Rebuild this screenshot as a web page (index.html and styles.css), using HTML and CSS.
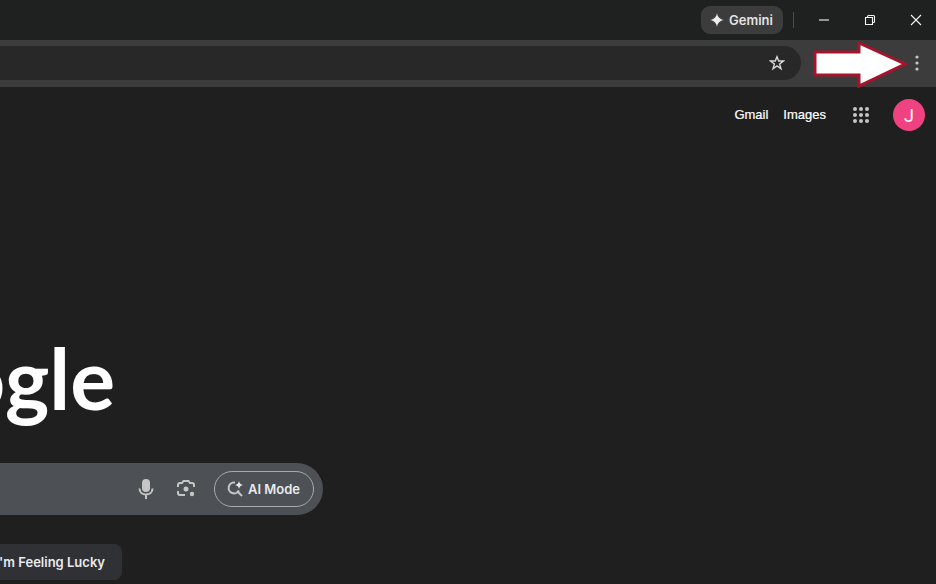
FILE: index.html
```html
<!DOCTYPE html>
<html lang="en">
<head>
<meta charset="utf-8">
<title>Google</title>
<link rel="stylesheet" href="styles.css">
</head>
<body>
<div class="titlebar">
  <div class="gemini">
    <svg class="gemini-icon" viewBox="0 0 14 14"><path d="M7 0C7.500 4 10 6.500 14 7C10 7.500 7.500 10 7 14C6.500 10 4 7.500 0 7C4 6.500 6.500 4 7 0Z"/></svg>
    <span>Gemini</span>
  </div>
  <div class="divider"></div>
  <div class="winbtn">
    <svg viewBox="0 0 12 12"><path d="M1 6H11" /></svg>
  </div>
  <div class="winbtn">
    <svg viewBox="0 0 12 12"><path d="M1.500 3.500H8.500V10.500H1.500Z M3.500 3.500V2.500Q3.500 1.500 4.500 1.500H9.500Q10.500 1.500 10.500 2.500V7.500Q10.500 8.500 9.500 8.500H8.500"/></svg>
  </div>
  <div class="winbtn">
    <svg viewBox="0 0 12 12"><path d="M1 1L11 11M11 1L1 11"/></svg>
  </div>
</div>
<div class="toolbar">
  <div class="omnibox">
    <svg class="star" viewBox="0 0 16 16"><path d="M8 1.700L9.700 6H14.500L10.600 8.900L12 13.700L8 10.900L4 13.700L5.400 8.900L1.500 6H6.300Z"/></svg>
  </div>
  <svg class="kebab" viewBox="0 0 4 16"><circle cx="2" cy="2" r="1.600"/><circle cx="2" cy="8" r="1.600"/><circle cx="2" cy="14" r="1.600"/></svg>
</div>
<svg class="arrow" viewBox="0 0 96 48"><polygon points="2,11 46,11 46,2 92,23 46,45 46,34 2,34"/></svg>
<main class="page">
  <header class="topnav">
    <a class="navlink">Gmail</a>
    <a class="navlink images">Images</a>
    <svg class="apps" viewBox="0 0 16 16"><circle cx="2" cy="2" r="2"/><circle cx="8" cy="2" r="2"/><circle cx="14" cy="2" r="2"/><circle cx="2" cy="8" r="2"/><circle cx="8" cy="8" r="2"/><circle cx="14" cy="8" r="2"/><circle cx="2" cy="14" r="2"/><circle cx="8" cy="14" r="2"/><circle cx="14" cy="14" r="2"/></svg>
    <div class="avatar">J</div>
  </header>
  <div class="logo"><span class="logo-word">Google</span></div>
  <div class="searchbox">
    <svg class="mic" viewBox="0 0 16 22"><rect x="4" y="1" width="8" height="13" rx="4"/><path class="line" d="M1.500 10.500C1.500 14.500 4.500 16.500 8 16.500C11.500 16.500 14.500 14.500 14.500 10.500M8 16.500V21"/></svg>
    <svg class="lens" viewBox="0 0 20 20"><path class="line" d="M2 8V6Q2 4 4 4H6L7.500 2H12.500L14 4H16Q18 4 18 6V8M2 12V14Q2 16 4 16H9"/><circle class="dot" cx="10" cy="10" r="2.500"/><circle class="dot" cx="16" cy="15" r="2.200"/></svg>
    <div class="aimode">
      <svg viewBox="0 0 18 18"><path class="line" d="M9 2.500A5.500 5.500 0 1 0 13 10.500M11 11L16 16"/><path class="spark" d="M13 1C13.300 3.200 14.800 4.700 17 5C14.800 5.300 13.300 6.800 13 9C12.700 6.800 11.200 5.300 9 5C11.200 4.700 12.700 3.200 13 1Z"/></svg>
      <span>AI Mode</span>
    </div>
  </div>
  <div class="lucky"><span>I'm Feeling Lucky</span></div>
</main>
</body>
</html>
```
FILE: styles.css
```css
* { box-sizing: border-box; }
html, body { margin: 0; height: 100%; overflow: hidden; }
body {
  background: #1f1f1f;
  display: flex;
  flex-direction: column;
  font-family: "Liberation Sans", sans-serif;
  color: #fff;
  width: 936px;
  height: 584px;
  position: relative;
}
svg { display: block; flex: none; }

.titlebar {
  height: 40px;
  background: #1f2120;
  display: flex;
  align-items: center;
  justify-content: flex-end;
  flex: none;
  margin-right: -3px;
}
.gemini {
  width: 82px;
  height: 28px;
  border-radius: 9px;
  background: #3c3c3c;
  display: flex;
  align-items: center;
  gap: 5px;
  padding-left: 9px;
  font: 600 13px Inter, sans-serif;
  color: #e3e3e3;
}
.gemini-icon { width: 14px; height: 14px; fill: #eee; }
.divider { width: 1px; height: 16px; background: #4a4a4a; margin: 0 7px 0 10px; }
.winbtn { width: 46px; height: 40px; display: flex; align-items: center; justify-content: center; }
.winbtn svg { width: 12px; height: 12px; fill: none; stroke: #f4f4f4; stroke-width: 1.100; }

.toolbar {
  height: 47px;
  background: #3c3c3c;
  display: flex;
  align-items: flex-start;
  flex: none;
  padding-top: 6px;
}
.omnibox {
  width: 801px;
  height: 34px;
  background: #282828;
  border-radius: 0 17px 17px 0;
  display: flex;
  align-items: center;
  justify-content: flex-end;
  padding-right: 16px;
}
.star { width: 16px; height: 16px; fill: none; stroke: #d8d8d8; stroke-width: 1.400; }
.kebab { width: 4px; height: 16px; fill: #c4c7c5; margin: 9px 0 0 114px; }

.arrow {
  position: absolute;
  left: 813px;
  top: 41px;
  width: 96px;
  height: 48px;
  fill: #fff;
  stroke: #a6142c;
  stroke-width: 3;
}

.page { flex: 1; min-height: 0; display: flex; flex-direction: column; background: #1f1f1f; }
.topnav { display: flex; align-items: center; justify-content: flex-end; height: 56px; padding-right: 11px; }
.navlink { font-size: 13px; color: #fff; position: relative; top: -1px; -webkit-text-stroke: 0.2px #fff; }
.images { margin-left: 15px; }
.apps { width: 16px; height: 16px; fill: #c4c7c5; margin: 0 24px 0 27px; }
.avatar {
  width: 32px;
  height: 32px;
  border-radius: 50%;
  background: #ef4280;
  display: flex;
  align-items: center;
  justify-content: center;
  font: 400 18px Roboto, sans-serif;
}

.logo {
  width: 115px;
  height: 110px;
  margin-top: 180px;
  overflow: hidden;
  display: flex;
  justify-content: flex-end;
  align-items: center;
  white-space: nowrap;
  font: 700 84px/110px Lato, sans-serif;
  color: #fff;
}
.logo-word { display: block; }
.searchbox {
  width: 323px;
  height: 52px;
  margin-top: 30px;
  background: #4d5156;
  border-radius: 0 26px 26px 0;
  display: flex;
  align-items: center;
  justify-content: flex-end;
  padding-right: 9px;
}
.line { fill: none; stroke: #c4c7c5; stroke-width: 2; }
.mic { width: 16px; height: 22px; fill: #c4c7c5; margin-right: 22px; }
.lens { width: 20px; height: 20px; margin-right: 18px; }
.dot { fill: #c4c7c5; }
.aimode {
  width: 100px;
  height: 36px;
  border: 1px solid #a8abad;
  border-radius: 18px;
  display: flex;
  align-items: center;
  gap: 4px;
  padding-left: 11px;
  font: 600 13px Inter, sans-serif;
  color: #e8eaed;
}
.aimode svg { width: 18px; height: 18px; }
.spark { fill: #e8e8e8; }

.lucky {
  width: 122px;
  height: 36px;
  margin-top: 29px;
  background: #303134;
  border-radius: 0 8px 8px 0;
  display: flex;
  align-items: center;
  justify-content: flex-end;
  padding-right: 17px;
  white-space: nowrap;
  overflow: hidden;
  font: 600 13px Inter, sans-serif;
  color: #e8eaed;
}
```
